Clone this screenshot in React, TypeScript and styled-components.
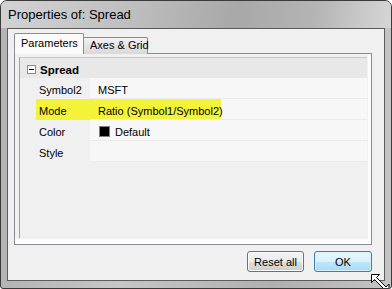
import React from 'react';
import styled, { createGlobalStyle, css } from 'styled-components';

const GlobalStyle = createGlobalStyle`
	html, body {
		margin: 0;
		padding: 0;
		background: #ffffff;
	}
	body {
		font-family: 'Liberation Sans', Arial, sans-serif;
		font-size: 11px;
		color: #000000;
	}
`;

type Prop = { name: string; value?: string; swatch?: string; marked?: boolean };

const props: Prop[] = [
	{ name: 'Symbol2', value: 'MSFT' },
	{ name: 'Mode', value: 'Ratio (Symbol1/Symbol2)', marked: true },
	{ name: 'Color', value: 'Default', swatch: '#000000' },
	{ name: 'Style' },
];

const App: React.FC = () => {
	return (
		<>
			<GlobalStyle />
			<Window>
				<TitleBar>Properties of: Spread</TitleBar>
				<Client>
					<TabStrip>
						<Tab active>Parameters</Tab>
						<Tab>Axes &amp; Grid</Tab>
					</TabStrip>
					<Panel>
						<Grid>
							<Category>
								<Expander />
								<CategoryName>Spread</CategoryName>
							</Category>
							{props.map((p) => (
								<Row key={p.name}>
									<Gutter />
									<Label marked={p.marked}>{p.name}</Label>
									<Value>
										<ValueText marked={p.marked}>
											{p.swatch && <Swatch color={p.swatch} />}
											{p.value}
										</ValueText>
									</Value>
								</Row>
							))}
						</Grid>
					</Panel>
					<ButtonRow>
						<Button>Reset all</Button>
						<Button primary>OK</Button>
					</ButtonRow>
				</Client>
				<Cursor width="21" height="19" viewBox="0 0 21 19">
					<polygon
						points="0.5,0.5 8.5,0.5 5.5,3.5 15,13 18,10 18,18 10,18 13,15 3.5,5.5 0.5,8.5"
						fill="#ffffff"
						stroke="#000000"
						strokeWidth="1"
						strokeLinejoin="miter"
					/>
				</Cursor>
			</Window>
		</>
	);
};

export default App;

const Window = styled.div`
	position: relative;
	width: 392px;
	height: 289px;
	box-sizing: border-box;
	border: 1px solid #3a3a3a;
	border-radius: 7px 7px 3px 3px;
	background: linear-gradient(90deg, #b4b4b4 0%, #c6c6c6 30%, #b0b0b0 70%, #c4c4c4 100%);
	display: flex;
	flex-direction: column;
	overflow: hidden;
`;

const TitleBar = styled.div`
	height: 27px;
	line-height: 27px;
	padding-left: 7px;
	font-size: 13px;
	color: #000000;
	background: linear-gradient(100deg, #d3d3d3 0%, #bdbdbd 35%, #a8a8a8 60%, #b4b4b4 80%, #d6d6d6 100%);
	flex-shrink: 0;
`;

const Client = styled.div`
	flex: 1;
	margin: 0 6px 7px 6px;
	border: 1px solid #5c5c5c;
	background: #f0f0f0;
	padding: 4px 12px 0 6px;
	display: flex;
	flex-direction: column;
`;

const TabStrip = styled.div`
	display: flex;
	align-items: flex-end;
	height: 21px;
	margin-bottom: -1px;
	position: relative;
	z-index: 1;
`;

const Tab = styled.div<{ active?: boolean }>`
	box-sizing: border-box;
	border: 1px solid #898c95;
	border-bottom: none;
	border-radius: 2px 2px 0 0;
	line-height: 14px;
	white-space: nowrap;
	${({ active }) =>
		active
			? css`
					width: 70px;
					height: 21px;
					padding: 2px 0 0 6px;
					background: #fbfbfb;
			  `
			: css`
					width: 65px;
					height: 17px;
					margin-left: -1px;
					padding: 0 0 0 6px;
					background: linear-gradient(#f3f3f3, #e3e3e3 50%, #d9d9d9);
			  `}
`;

const Panel = styled.div`
	box-sizing: border-box;
	width: 358px;
	height: 192px;
	border: 1px solid #898c95;
	background: #f0f0f0;
	padding: 3px 4px 6px 4px;
	box-shadow: inset -3px -5px 0 #fcfcfc;
	display: flex;
`;

const Grid = styled.div`
	flex: 1;
	border-left: 1px solid #a0a0a0;
	border-top: 1px solid #c8c8c8;
	background: #f0f0f0;
	display: flex;
	flex-direction: column;
`;

const Category = styled.div`
	height: 20px;
	background: #e8e8e8;
	display: flex;
	align-items: center;
	padding-left: 7px;
`;

const Expander = styled.span`
	box-sizing: border-box;
	width: 9px;
	height: 9px;
	margin-top: 2px;
	border: 1px solid #8a8a8a;
	background: #ffffff;
	position: relative;

	&::after {
		content: '';
		position: absolute;
		left: 1px;
		right: 1px;
		top: 3px;
		height: 1px;
		background: #000000;
	}
`;

const CategoryName = styled.span`
	margin-left: 4px;
	padding-top: 3px;
	font-weight: bold;
	font-size: 11.5px;
`;

const Row = styled.div`
	display: flex;
	height: 21px;
`;

const Gutter = styled.div`
	width: 16px;
	flex-shrink: 0;
`;

const Label = styled.div<{ marked?: boolean }>`
	width: 51px;
	flex-shrink: 0;
	padding: 4px 0 0 3px;
	line-height: 16px;
	background: ${({ marked }) => (marked ? '#f3f33a' : 'transparent')};
`;

const Value = styled.div`
	flex: 1;
	box-sizing: border-box;
	background: #f7f7f7;
	border-bottom: 1px solid #ebebeb;
	display: flex;
`;

const ValueText = styled.div<{ marked?: boolean }>`
	display: flex;
	align-items: flex-start;
	padding: 4px 0 0 8px;
	line-height: 16px;
	white-space: nowrap;
	${({ marked }) =>
		marked &&
		css`
			width: 123px;
			background: #f3f33a;
		`}
`;

const Swatch = styled.span<{ color: string }>`
	box-sizing: border-box;
	width: 11px;
	height: 11px;
	margin: 2px 5px 0 1px;
	border: 1px solid #808080;
	background: ${({ color }) => color};
`;

const ButtonRow = styled.div`
	display: flex;
	justify-content: flex-end;
	gap: 10px;
	margin-top: 6px;
`;

const Button = styled.div<{ primary?: boolean }>`
	box-sizing: border-box;
	width: ${({ primary }) => (primary ? '58px' : '57px')};
	height: 21px;
	border-radius: 3px;
	display: flex;
	align-items: center;
	justify-content: center;
	${({ primary }) =>
		primary
			? css`
					border: 1px solid #3c7fb1;
					background: linear-gradient(#eaf6fd 0%, #d9f0fc 50%, #bee6fd 51%, #a7d9f5 100%);
					box-shadow: inset 0 0 0 1px #d6f0fc;
			  `
			: css`
					border: 1px solid #707070;
					background: linear-gradient(#f2f2f2 0%, #ebebeb 50%, #dddddd 51%, #cfcfcf 100%);
					box-shadow: inset 0 0 0 1px #fcfcfc;
			  `}
`;

const Cursor = styled.svg`
	position: absolute;
	left: 370px;
	top: 273px;
`;
